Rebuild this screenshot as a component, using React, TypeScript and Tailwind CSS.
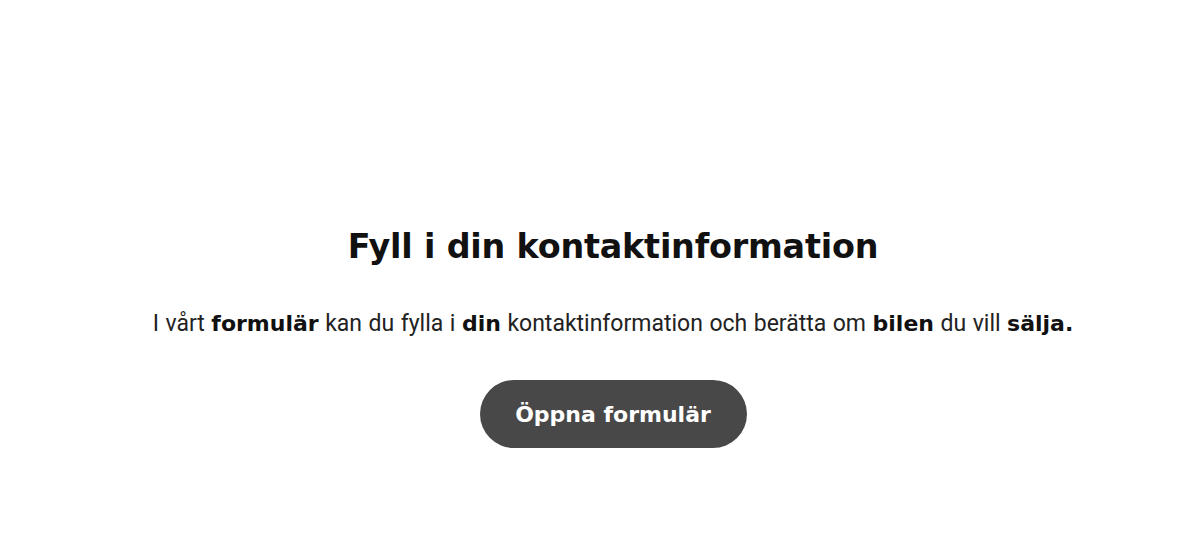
const App = () => {
  return (
    <div className="flex h-[543px] w-full flex-col items-center bg-white pl-[26px]">
      <h2 className="mt-[224px] font-['DejaVu_Sans',sans-serif] text-[33.4px] font-bold leading-[46px] tracking-[-0.2px] text-[#111]">
        Fyll i din kontaktinformation
      </h2>
      <p className="mt-[38px] font-['Roboto',sans-serif] text-[23px] leading-[32px] text-[#222] [word-spacing:0.8px]">
        I vårt{" "}
        <strong className="font-['DejaVu_Sans',sans-serif] text-[22px] font-bold text-[#111]">
          formulär
        </strong>{" "}
        kan du fylla i{" "}
        <strong className="font-['DejaVu_Sans',sans-serif] text-[22px] font-bold text-[#111]">
          din
        </strong>{" "}
        kontaktinformation och berätta om{" "}
        <strong className="font-['DejaVu_Sans',sans-serif] text-[22px] font-bold text-[#111]">
          bilen
        </strong>{" "}
        du vill{" "}
        <strong className="font-['DejaVu_Sans',sans-serif] text-[22px] font-bold text-[#111]">
          sälja.
        </strong>
      </p>
      <button className="mt-[40px] flex h-[68px] w-[267px] items-center justify-center rounded-full bg-[#484848] font-['DejaVu_Sans',sans-serif] text-[22px] font-bold text-white">
        Öppna formulär
      </button>
    </div>
  );
};

export default App;
